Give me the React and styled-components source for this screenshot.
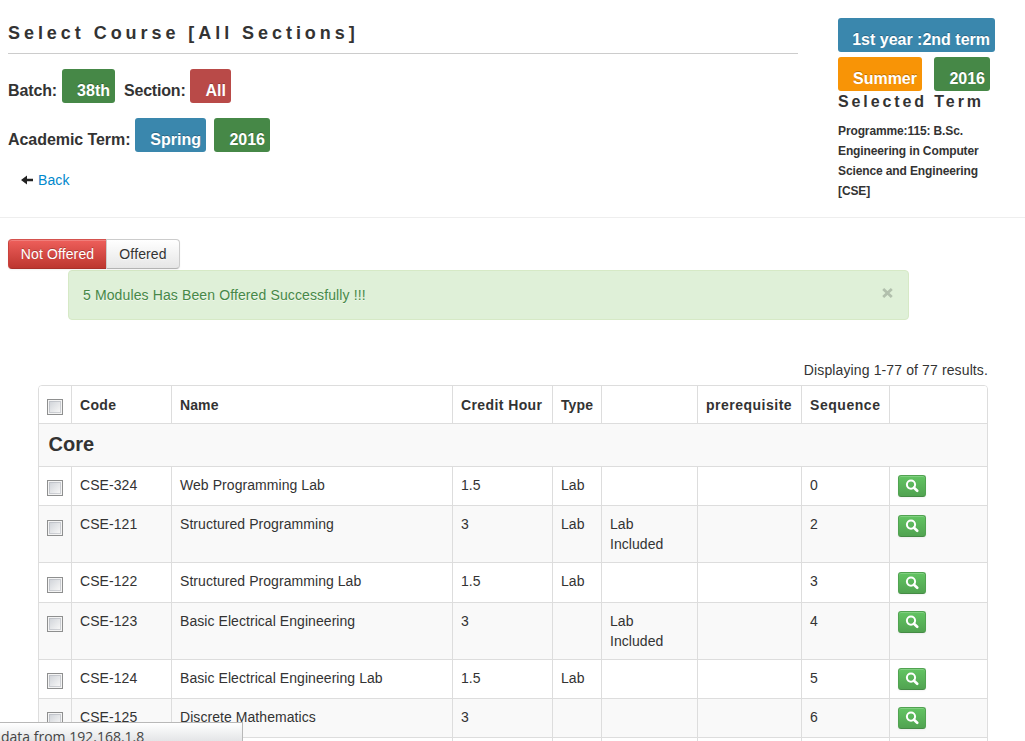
import React from "react";
import styled, { createGlobalStyle, css } from "styled-components";

const GlobalStyle = createGlobalStyle`
  * { box-sizing: border-box; }
  html, body { margin: 0; padding: 0; }
  body {
    background: #fff;
    color: #333;
    font: 14px/20px "Liberation Sans", Arial, sans-serif;
    overflow: hidden;
  }
`;

const Page = styled.div`
  position: relative;
  width: 1025px;
  height: 741px;
  overflow: hidden;
  white-space: nowrap;
`;

const Header = styled.header`
  display: flex;
  height: 218px;
  padding-left: 8px;
  border-bottom: 1px solid #eee;
`;

const CourseInfo = styled.section`
  width: 790px;
  margin-right: 40px;
`;

const Title = styled.h1`
  height: 54px;
  margin: 0;
  padding-top: 23px;
  border-bottom: 1px solid #ccc;
  font-size: 18px;
  line-height: 20px;
  letter-spacing: 3.95px;
`;

const InfoLine = styled.div`
  display: flex;
  align-items: flex-start;
  height: 34px;
  margin-top: 15px;
  font-size: 16px;
  font-weight: bold;
`;

const Caption = styled.span`
  width: ${(p) => p.$width}px;
  padding-top: 12px;
  letter-spacing: ${(p) => p.$spacing || 0}px;
`;

const labelColors = {
  success: "#468847",
  important: "#b94a48",
  info: "#3a87ad",
  warning: "#f89406",
};

const Label = styled.span`
  display: block;
  width: ${(p) => p.$width}px;
  height: 34px;
  margin-right: ${(p) => p.$gap || 0}px;
  padding: 12px 5px 0 0;
  border-radius: 3px;
  background: ${(p) => labelColors[p.$kind]};
  color: #fff;
  font-size: 16px;
  font-weight: bold;
  text-align: right;
  text-shadow: 0 -1px 0 rgba(0, 0, 0, 0.25);
`;

const BackLink = styled.a`
  display: flex;
  align-items: center;
  gap: 5px;
  margin: 18px 0 0 13px;
  color: #08c;
  letter-spacing: 0.1px;
`;

const TermPanel = styled.aside`
  width: 160px;
  padding-top: 18px;
`;

const LabelRow = styled.div`
  display: flex;
  margin-bottom: ${(p) => p.$below || 0}px;
`;

const TermTitle = styled.div`
  padding-top: 1px;
  font-size: 16px;
  font-weight: bold;
  letter-spacing: 2.9px;
`;

const Programme = styled.div`
  width: 150px;
  margin-top: 9px;
  font-size: 12px;
  font-weight: bold;
  letter-spacing: -0.12px;
  white-space: normal;
`;

const ButtonGroup = styled.div`
  display: flex;
  height: 30px;
  margin: 21px 0 1px 8px;
`;

const Tab = styled.button`
  width: ${(p) => p.$width}px;
  padding: 0;
  border: 1px solid #ccc;
  border-bottom-color: #b3b3b3;
  border-radius: 0 4px 4px 0;
  background: linear-gradient(#fff, #e6e6e6);
  box-shadow: inset 0 1px 0 rgba(255, 255, 255, 0.2), 0 1px 2px rgba(0, 0, 0, 0.05);
  color: #333;
  font: inherit;
  letter-spacing: 0.12px;
  text-shadow: 0 1px 1px rgba(255, 255, 255, 0.75);
  ${(p) =>
    p.$danger &&
    css`
      border-color: #d4524e #bd362f #a9302a #c9423c;
      border-right: 0;
      border-radius: 4px 0 0 4px;
      background: linear-gradient(#ee5f5b, #bd362f);
      color: #fff;
      text-shadow: 0 -1px 0 rgba(0, 0, 0, 0.25);
    `}
`;

const Alert = styled.div`
  display: flex;
  justify-content: space-between;
  width: 841px;
  height: 50px;
  margin-left: 68px;
  padding: 14px 15px 0 14px;
  border: 1px solid #d6e9c6;
  border-radius: 4px;
  background: #dff0d8;
  color: #468847;
  letter-spacing: 0.12px;
  text-shadow: 0 1px 0 rgba(255, 255, 255, 0.5);
`;

const CloseIcon = styled.svg`
  display: block;
  margin-top: 3px;
`;

const Summary = styled.div`
  width: 988px;
  margin-top: 40px;
  letter-spacing: 0.12px;
  text-align: right;
`;

const Table = styled.div`
  width: 950px;
  margin: 5px 0 0 38px;
  border: 1px solid #ddd;
  border-radius: 4px 4px 0 0;
  overflow: hidden;
`;

const Row = styled.div`
  display: grid;
  grid-template-columns: 32px 100px 281px 100px 49px 96px 104px 88px 98px;
  height: ${(p) => p.$height}px;
  background: ${(p) => (p.$odd ? "#f9f9f9" : "#fff")};
  & + & { border-top: 1px solid #ddd; }
`;

const Cell = styled.div`
  padding: 8px 8px 0;
  white-space: normal;
  letter-spacing: 0.06px;
  & + & { border-left: 1px solid #ddd; }
`;

const HeadCell = styled(Cell)`
  padding: 9px 0 0 8px;
  font-weight: bold;
  letter-spacing: ${(p) => p.$spacing || 0}px;
  white-space: nowrap;
`;

const GroupCell = styled.div`
  grid-column: 1 / -1;
  padding: 10px 0 0 9.5px;
  font-size: 20px;
  font-weight: bold;
`;

const Box = styled.span`
  display: block;
  width: 16px;
  height: 16px;
  margin-top: ${(p) => p.$top}px;
  border: 1px solid #8e8f8f;
  background: linear-gradient(135deg, #cbcfd5, #f6f6f6 85%);
  box-shadow: inset 0 0 0 1px #f4f4f4, inset 0 0 0 2px rgba(174, 179, 185, 0.55);
`;

const ViewButton = styled.button`
  display: flex;
  align-items: center;
  justify-content: center;
  width: 28px;
  height: 22px;
  margin-top: ${(p) => p.$top || 0}px;
  padding: 0;
  border: 1px solid #51a351;
  border-bottom-color: #458b45;
  border-radius: 3px;
  background: linear-gradient(#62c462, #51a351);
  box-shadow: inset 0 1px 0 rgba(255, 255, 255, 0.2), 0 1px 2px rgba(0, 0, 0, 0.05);
`;

const StatusBar = styled.div`
  position: absolute;
  left: 0;
  bottom: 0;
  width: 243px;
  height: 19px;
  padding: 4px 0 0 1px;
  border: solid #b8b8b8;
  border-width: 1px 1px 0 0;
  background: linear-gradient(#fff, #e4e5e7);
  color: #444;
  font: 14px/20px "Open Sans", "Noto Sans", sans-serif;
  overflow: hidden;
`;

const ArrowLeft = () => (
  <svg width="12" height="10" viewBox="0 0 12 10">
    <path d="M0 5 6 0.4V3.7H12V6.3H6V9.6Z" fill="#222" />
  </svg>
);

const SearchIcon = () => (
  <svg width="14" height="14" viewBox="0 0 14 14" fill="none" stroke="#fff">
    <circle cx="6" cy="5.6" r="4.1" strokeWidth="2" />
    <path d="M9 8.7 12.2 11.8" strokeWidth="2.6" strokeLinecap="round" />
  </svg>
);

const columns = [
  ["Code", 0.35],
  ["Name", 0.1],
  ["Credit Hour", 0.4],
  ["Type", 0.1],
  ["", 0],
  ["prerequisite", 0.5],
  ["Sequence", 0.55],
  ["", 0],
];

const courses = [
  { code: "CSE-324", name: "Web Programming Lab", credit: "1.5", type: "Lab", note: "", seq: 0, h: 39, box: 5, btn: 0 },
  { code: "CSE-121", name: "Structured Programming", credit: "3", type: "Lab", note: "Lab Included", seq: 2, h: 57, box: 6, btn: 1 },
  { code: "CSE-122", name: "Structured Programming Lab", credit: "1.5", type: "Lab", note: "", seq: 3, h: 40, box: 6, btn: 1 },
  { code: "CSE-123", name: "Basic Electrical Engineering", credit: "3", type: "", note: "Lab Included", seq: 4, h: 57, box: 5, btn: 0 },
  { code: "CSE-124", name: "Basic Electrical Engineering Lab", credit: "1.5", type: "Lab", note: "", seq: 5, h: 39, box: 5, btn: 0 },
  { code: "CSE-125", name: "Discrete Mathematics", credit: "3", type: "", note: "", seq: 6, h: 39, box: 5, btn: 0 },
];

export default function App() {
  return (
    <Page>
      <GlobalStyle />
      <Header>
        <CourseInfo>
          <Title>Select Course [All Sections]</Title>
          <InfoLine>
            <Caption $width={54} $spacing={-0.12}>Batch:</Caption>
            <Label $kind="success" $width={53} $gap={9}>38th</Label>
            <Caption $width={66} $spacing={-0.2}>Section:</Caption>
            <Label $kind="important" $width={41}>All</Label>
          </InfoLine>
          <InfoLine>
            <Caption $width={127} $spacing={-0.06}>Academic Term:</Caption>
            <Label $kind="info" $width={71} $gap={8}>Spring</Label>
            <Label $kind="success" $width={56}>2016</Label>
          </InfoLine>
          <BackLink>
            <ArrowLeft />
            Back
          </BackLink>
        </CourseInfo>
        <TermPanel>
          <LabelRow $below={5}>
            <Label $kind="info" $width={157}>1st year :2nd term</Label>
          </LabelRow>
          <LabelRow>
            <Label $kind="warning" $width={84} $gap={12}>Summer</Label>
            <Label $kind="success" $width={56}>2016</Label>
          </LabelRow>
          <TermTitle>Selected Term</TermTitle>
          <Programme>
            Programme:115: B.Sc. Engineering in Computer Science and Engineering [CSE]
          </Programme>
        </TermPanel>
      </Header>
      <ButtonGroup>
        <Tab $danger $width={98}>Not Offered</Tab>
        <Tab $width={74}>Offered</Tab>
      </ButtonGroup>
      <Alert>
        5 Modules Has Been Offered Successfully !!!
        <CloseIcon width="11" height="10" viewBox="0 0 11 10">
          <path d="M1.2 1 9.8 9M9.8 1 1.2 9" stroke="#b2c0ad" strokeWidth="2.8" />
        </CloseIcon>
      </Alert>
      <Summary>Displaying 1-77 of 77 results.</Summary>
      <Table>
        <Row $height={37}>
          <HeadCell><Box $top={4} /></HeadCell>
          {columns.map(([title, spacing], i) => (
            <HeadCell key={i} $spacing={spacing}>{title}</HeadCell>
          ))}
        </Row>
        <Row $height={43} $odd>
          <GroupCell>Core</GroupCell>
        </Row>
        {courses.map((c, i) => (
          <Row key={c.code} $height={c.h} $odd={i % 2 === 1}>
            <Cell><Box $top={c.box} /></Cell>
            <Cell>{c.code}</Cell>
            <Cell>{c.name}</Cell>
            <Cell>{c.credit}</Cell>
            <Cell>{c.type}</Cell>
            <Cell>{c.note}</Cell>
            <Cell />
            <Cell>{c.seq}</Cell>
            <Cell><ViewButton $top={c.btn}><SearchIcon /></ViewButton></Cell>
          </Row>
        ))}
        <Row $height={39}>
          {Array.from({ length: 9 }, (_, i) => <Cell key={i} />)}
        </Row>
      </Table>
      <StatusBar>data from 192.168.1.8</StatusBar>
    </Page>
  );
}
